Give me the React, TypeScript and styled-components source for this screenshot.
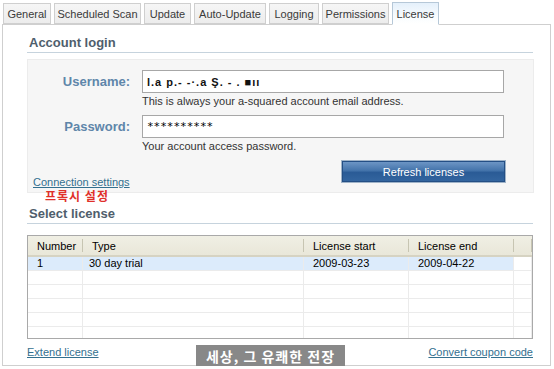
import React from 'react';
import styled, { createGlobalStyle } from 'styled-components';

const GlobalStyle = createGlobalStyle`
  html, body {
    margin: 0;
    padding: 0;
    background: #ffffff;
  }
  body {
    font-family: "Liberation Sans", Arial, sans-serif;
    font-size: 11px;
    color: #000;
  }
`;

const Window = styled.div`
  width: 554px;
  height: 369px;
  background: #ffffff;
  position: relative;
  overflow: hidden;
`;

const TabBar = styled.div`
  display: flex;
  align-items: flex-end;
  gap: 3px;
  height: 24px;
  padding-left: 3px;
  box-sizing: border-box;
`;

const Tab = styled.div<{ $active?: boolean; $w: number }>`
  width: ${p => p.$w}px;
  height: ${p => (p.$active ? '23px' : '21px')};
  display: flex;
  align-items: center;
  justify-content: center;
  box-sizing: border-box;
  border: 1px solid ${p => (p.$active ? '#b6c8d8' : '#cfcfcf')};
  border-bottom: ${p => (p.$active ? '1px solid #ffffff' : '1px solid #cfcfcf')};
  margin-bottom: ${p => (p.$active ? '-1px' : '0')};
  background: ${p =>
    p.$active
      ? 'linear-gradient(#e4f0fb, #f7fbfe 60%, #ffffff)'
      : 'linear-gradient(#f6f6f6, #ececec)'};
  color: #3a3a3a;
  font-size: 11px;
  position: relative;
  z-index: ${p => (p.$active ? 2 : 1)};
`;

const Panel = styled.div`
  margin: 0 3px 0 2px;
  height: 342px;
  box-sizing: border-box;
  border: 1px solid #cfcfcf;
  padding: 9px 16px 0 24px;
  display: flex;
  flex-direction: column;
  position: relative;
`;

const SectionTitle = styled.div<{ $gap?: number }>`
  margin-top: ${p => p.$gap ?? 0}px;
  padding-left: 2px;
  height: 18px;
  line-height: 18px;
  font-size: 13px;
  font-weight: bold;
  color: #4f5e6c;
  border-bottom: 1px solid #c6d3dd;
  margin-right: 1px;
`;

const LoginBox = styled.div`
  margin-top: 6px;
  height: 134px;
  box-sizing: border-box;
  background: #f6f6f6;
  border: 1px solid #ececec;
  padding-top: 10px;
  display: flex;
  flex-direction: column;
  position: relative;
`;

const FormGrid = styled.div`
  display: grid;
  grid-template-columns: 102px 362px;
  column-gap: 12px;
  align-items: center;
`;

const FieldLabel = styled.div`
  text-align: right;
  font-size: 13px;
  font-weight: bold;
  color: #5f86aa;
  height: 23px;
  line-height: 23px;
`;

const Input = styled.div`
  height: 23px;
  box-sizing: border-box;
  background: #fff;
  border: 1px solid #a7a7a7;
  padding: 0 4px;
  display: flex;
  align-items: center;
  font-size: 11px;
  font-family: "DejaVu Sans Mono", monospace;
  color: #000;
`;

const Hint = styled.div`
  grid-column: 2;
  height: 14px;
  line-height: 14px;
  margin: 1px 0 7px 0;
  color: #333;
`;

const Scribble = styled.span`
  font-family: "Liberation Sans", Arial, sans-serif;
  font-weight: bold;
  letter-spacing: 1px;
  color: #111;
`;

const BoxFooter = styled.div`
  flex: 1;
  display: flex;
  justify-content: space-between;
  align-items: flex-start;
  padding: 0 27px 0 5px;
`;

const LinkText = styled.span`
  color: #33708f;
  text-decoration: underline;
  font-size: 11px;
  line-height: 13px;
`;

const ConnLink = styled(LinkText)`
  margin-top: 16px;
`;

const RefreshButton = styled.div`
  width: 165px;
  height: 23px;
  box-sizing: border-box;
  border: 1px solid #9fb3c8;
  background: linear-gradient(#7199c8 0%, #4474ab 45%, #2a5b96 55%, #3466a0 100%);
  box-shadow: inset 0 0 0 1px #244f85;
  color: #fff;
  display: flex;
  align-items: center;
  justify-content: center;
  font-size: 11px;
`;

const Annotation = styled.div`
  position: absolute;
  left: 17px;
  bottom: -10px;
  color: #e0302a;
  font-weight: bold;
  font-size: 12px;
  font-family: "Noto Sans CJK KR", sans-serif;
  line-height: 13px;
  letter-spacing: 1px;
`;

const Table = styled.div`
  margin-top: 11px;
  margin-right: 1px;
  height: 104px;
  box-sizing: border-box;
  border: 1px solid #a9a9a9;
  display: flex;
  flex-direction: column;
  overflow: hidden;
  background: #fff;
`;

const cols = '55px 221px 105px 105px 1fr';

const HeaderRow = styled.div`
  display: grid;
  grid-template-columns: ${cols};
  height: 21px;
  flex-shrink: 0;
  background: linear-gradient(#f0efe4, #e9e7d9);
  border-bottom: 2px solid #d6d3c2;
  box-sizing: border-box;
`;

const HeaderCell = styled.div`
  padding-left: 9px;
  display: flex;
  align-items: center;
  border-right: 1px solid #c7c5b2;
  margin: 3px 0;
  font-size: 11px;
`;

const Row = styled.div`
  display: grid;
  grid-template-columns: ${cols};
  height: 14px;
  flex-shrink: 0;
  border-bottom: 1px solid #ebebeb;
  box-sizing: border-box;
`;

const Cell = styled.div<{ $selected?: boolean; $pad?: number }>`
  padding-left: ${p => p.$pad ?? 6}px;
  line-height: 13px;
  border-right: 1px solid #ebebeb;
  background: ${p => (p.$selected ? '#dcebfb' : 'transparent')};
  white-space: nowrap;
  font-size: 11px;
`;

const BottomRow = styled.div`
  margin-top: 7px;
  display: flex;
  justify-content: space-between;
  margin-right: 1px;
`;

const Watermark = styled.div`
  position: absolute;
  left: 193px;
  top: 320px;
  width: 149px;
  height: 21px;
  background: #888888;
  color: #fff;
  font-family: "Noto Sans CJK KR", sans-serif;
  font-weight: bold;
  font-size: 14px;
  display: flex;
  align-items: center;
  justify-content: center;
  letter-spacing: 1px;
`;

const tabs: [string, number][] = [
  ['General', 48],
  ['Scheduled Scan', 87],
  ['Update', 47],
  ['Auto-Update', 72],
  ['Logging', 50],
  ['Permissions', 67],
  ['License', 47],
];

const rows = [
  { n: '1', type: '30 day trial', start: '2009-03-23', end: '2009-04-22' },
  null, null, null, null, null,
];

export default function App() {
  return (
    <Window>
      <GlobalStyle />
      <TabBar>
        {tabs.map(([t, w]) => (
          <Tab key={t} $w={w} $active={t === 'License'}>{t}</Tab>
        ))}
      </TabBar>
      <Panel>
        <SectionTitle>Account login</SectionTitle>
        <LoginBox>
          <FormGrid>
            <FieldLabel>Username:</FieldLabel>
            <Input><Scribble>l.a p.- -·.a Ş. - . ■ıı</Scribble></Input>
            <Hint>This is always your a-squared account email address.</Hint>
            <FieldLabel>Password:</FieldLabel>
            <Input>**********</Input>
            <Hint>Your account access password.</Hint>
          </FormGrid>
          <BoxFooter>
            <ConnLink>Connection settings</ConnLink>
            <RefreshButton>Refresh licenses</RefreshButton>
          </BoxFooter>
          <Annotation>프록시 설정</Annotation>
        </LoginBox>
        <SectionTitle $gap={12}>Select license</SectionTitle>
        <Table>
          <HeaderRow>
            <HeaderCell>Number</HeaderCell>
            <HeaderCell>Type</HeaderCell>
            <HeaderCell>License start</HeaderCell>
            <HeaderCell>License end</HeaderCell>
            <HeaderCell />
          </HeaderRow>
          {rows.map((r, i) => (
            <Row key={i}>
              <Cell $selected={!!r} $pad={9}>{r?.n}</Cell>
              <Cell $selected={!!r}>{r?.type}</Cell>
              <Cell $selected={!!r} $pad={9}>{r?.start}</Cell>
              <Cell $selected={!!r} $pad={9}>{r?.end}</Cell>
              <Cell />
            </Row>
          ))}
        </Table>
        <BottomRow>
          <LinkText>Extend license</LinkText>
          <LinkText>Convert coupon code</LinkText>
        </BottomRow>
        <Watermark>세상, 그 유쾌한 전장</Watermark>
      </Panel>
    </Window>
  );
}
